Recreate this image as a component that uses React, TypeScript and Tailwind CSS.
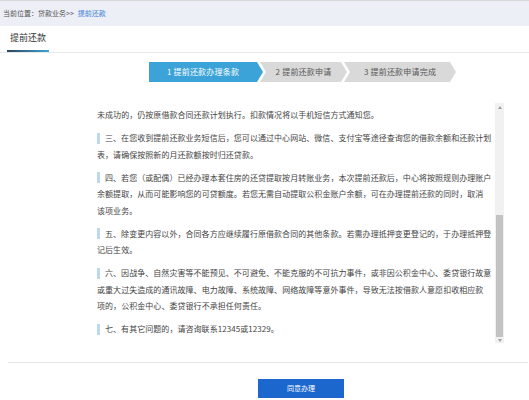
import React from 'react';

const font = "[font-family:'Noto_Sans_CJK_SC','Microsoft_YaHei',sans-serif]";

const steps = [
  { label: '1 提前还款办理条款', active: true },
  { label: '2 提前还款申请', active: false },
  { label: '3 提前还款申请完成', active: false },
];

// each paragraph split where the reference wraps
const clauses: { lines: string[]; bar: boolean }[] = [
  { bar: false, lines: ['未成功的，仍按原借款合同还款计划执行。扣款情况将以手机短信方式通知您。'] },
  {
    bar: true,
    lines: [
      '三、在您收到提前还款业务短信后，您可以通过中心网站、微信、支付宝等途径查询您的借款余额和还款计划',
      '表，请确保按照新的月还款额按时归还贷款。',
    ],
  },
  {
    bar: true,
    lines: [
      '四、若您（或配偶）已经办理本套住房的还贷提取按月转账业务，本次提前还款后，中心将按照规则办理账户',
      '余额提取，从而可能影响您的可贷额度。若您无需自动提取公积金账户余额，可在办理提前还款的同时，取消',
      '该项业务。',
    ],
  },
  {
    bar: true,
    lines: [
      '五、除变更内容以外，合同各方应继续履行原借款合同的其他条款。若需办理抵押变更登记的，于办理抵押登',
      '记后生效。',
    ],
  },
  {
    bar: true,
    lines: [
      '六、因战争、自然灾害等不能预见、不可避免、不能克服的不可抗力事件，或非因公积金中心、委贷银行故意',
      '或重大过失造成的通讯故障、电力故障、系统故障、网络故障等意外事件，导致无法按借款人意愿扣收相应款',
      '项的，公积金中心、委贷银行不承担任何责任。',
    ],
  },
  { bar: true, lines: ['七、有其它问题的，请咨询联系12345或12329。'] },
];

export default function App() {
  return (
    <div className={`w-[529px] h-[400px] overflow-hidden bg-white ${font}`}>
      {/* breadcrumb */}
      <div className="h-[26px] border-t border-[#d6d6d6] bg-[#edeff7] pl-[3px] flex items-center text-[7px] text-[#555]">
        <span>当前位置：贷款业务&gt;&gt;</span>
        <span className="ml-[4px] text-[#3d7fd6]">提前还款</span>
      </div>

      {/* tabs */}
      <div className="h-[27px] border-b border-[#e8e8e8] flex">
        <div className="ml-[7px] w-[42px] flex flex-col">
          <div className="flex-1 flex items-center justify-center text-[9px] text-[#333]">提前还款</div>
          <div className="h-[2px] bg-gradient-to-r from-[#2a4560] to-[#3aa6d8]" />
        </div>
      </div>

      {/* steps */}
      <div className="mt-[9px] pl-[149px] flex h-[20px] text-[8px] tracking-[0.2px]">
        {steps.map((s, i) => (
          <div
            key={s.label}
            className={
              i === 0
                ? 'w-[114px] pr-[6px] flex items-center justify-center bg-[#3ba3d8] text-white [clip-path:polygon(0_0,calc(100%_-_6px)_0,100%_50%,calc(100%_-_6px)_100%,0_100%)]'
                : i === 1
                  ? 'w-[87px] ml-[-3px] px-[6px] flex items-center justify-center bg-[#d9d9d9] text-[#555] [clip-path:polygon(0_0,calc(100%_-_6px)_0,100%_50%,calc(100%_-_6px)_100%,0_100%,6px_50%)]'
                  : 'w-[112px] ml-[-3px] px-[6px] flex items-center justify-center bg-[#d9d9d9] text-[#555] [clip-path:polygon(0_0,calc(100%_-_6px)_0,100%_50%,calc(100%_-_6px)_100%,0_100%,6px_50%)]'
            }
          >
            {s.label}
          </div>
        ))}
      </div>

      {/* clause scroll box */}
      <div className="mt-[21px] h-[240px] flex">
        <div className="flex-1 pl-[97px] pt-[4px] flex flex-col gap-[6.5px] text-[8px] leading-[16.5px] tracking-[0.05px] text-[#444] whitespace-nowrap overflow-hidden">
          {clauses.map((c, i) => (
            <div key={i}>
              {c.lines.map((line, j) => (
                <div key={j} className="flex items-center">
                  {c.bar && j === 0 && <span className="inline-block w-[3px] h-[11px] bg-[#bcd9ef] mr-[5px]" />}
                  {line}
                </div>
              ))}
            </div>
          ))}
        </div>
        <div className="w-[9px] mr-[25px] bg-[#f1f1f1] flex flex-col">
          <div className="h-[9px] flex items-center justify-center">
            <div className="w-0 h-0 border-x-[2px] border-b-[3px] border-x-transparent border-b-[#a0a0a0]" />
          </div>
          <div className="h-[103px]" />
          <div className="h-[122px] mx-[1px] bg-[#c3c3c3]" />
          <div className="h-[6px] flex items-center justify-center">
            <div className="w-0 h-0 border-x-[2px] border-t-[3px] border-x-transparent border-t-[#a0a0a0]" />
          </div>
        </div>
      </div>

      {/* footer */}
      <div className="mt-[19px] ml-[8px] mr-[1px] h-px bg-[#e6e6e6]" />
      <button className="mt-[16px] ml-[258px] w-[86px] h-[19px] flex items-center justify-center bg-[#1b67cd] text-white text-[7px]">
        同意办理
      </button>
    </div>
  );
}
